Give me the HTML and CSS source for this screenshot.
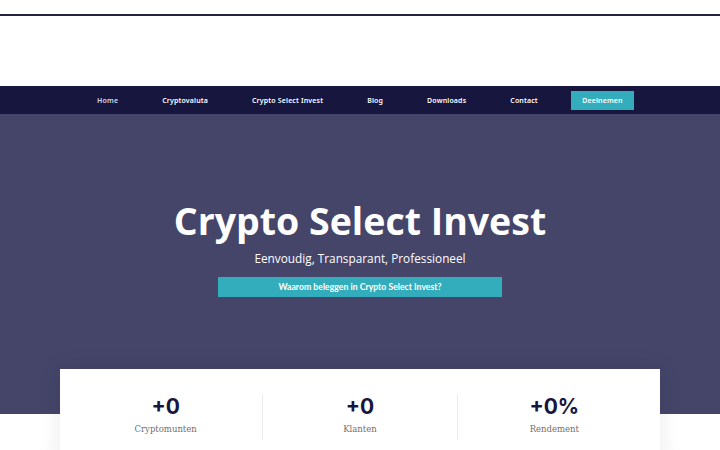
FILE: index.html
```html
<!DOCTYPE html>
<html lang="nl">
<head>
<meta charset="utf-8">
<title>Crypto Select Invest</title>
<link rel="stylesheet" href="styles.css">
</head>
<body>
<div class="topline"></div>
<header class="header"></header>
<nav class="nav">
  <ul class="menu">
    <li><a class="link home" href="#">Home</a></li>
    <li><a class="link" href="#">Cryptovaluta</a></li>
    <li><a class="link" href="#">Crypto Select Invest</a></li>
    <li><a class="link" href="#">Blog</a></li>
    <li><a class="link" href="#">Downloads</a></li>
    <li><a class="link" href="#">Contact</a></li>
    <li><a class="join" href="#">Deelnemen</a></li>
  </ul>
</nav>
<section class="hero">
  <h1 class="title">Crypto Select Invest</h1>
  <p class="subtitle">Eenvoudig, Transparant, Professioneel</p>
  <a class="cta" href="#">Waarom beleggen in Crypto Select Invest?</a>
</section>
<section class="stats-wrap">
  <div class="stats">
    <div class="stat">
      <div class="num">+0</div>
      <div class="label">Cryptomunten</div>
    </div>
    <div class="stat">
      <div class="num">+0</div>
      <div class="label">Klanten</div>
    </div>
    <div class="stat">
      <div class="num">+0%</div>
      <div class="label">Rendement</div>
    </div>
  </div>
</section>
</body>
</html>
```
FILE: styles.css
```css
* { box-sizing: border-box; }
html, body { margin: 0; padding: 0; }
body {
  background: #ffffff;
  font-family: "Open Sans", "Noto Sans", sans-serif;
  overflow: hidden;
  height: 450px;
}
.topline {
  margin-top: 14px;
  height: 2px;
  background: #25253f;
}
.header {
  height: 70px;
  background: #ffffff;
}
.nav {
  height: 28px;
  background: #16163f;
  display: flex;
  align-items: center;
  justify-content: center;
  padding-right: 11px;
}
.menu {
  list-style: none;
  margin: 0;
  padding: 0;
  display: flex;
  align-items: center;
}
.link {
  display: block;
  padding: 0 22px;
  color: #ffffff;
  text-decoration: none;
  font-family: "Noto Sans", sans-serif;
  font-weight: 600;
  font-size: 7px;
  letter-spacing: 0.15px;
}
.home { color: #d8d8e4; }
.join {
  display: block;
  margin-left: 11px;
  width: 63px;
  height: 19px;
  line-height: 19px;
  text-align: center;
  background: #33adbb;
  color: #ffffff;
  text-decoration: none;
  font-family: "Noto Sans", sans-serif;
  font-weight: 600;
  font-size: 7px;
  letter-spacing: 0.15px;
}
.hero {
  height: 300px;
  background: #45456a;
  display: flex;
  flex-direction: column;
  align-items: center;
  padding-top: 84px;
}
.title {
  margin: 0;
  color: #ffffff;
  font-family: "Open Sans", sans-serif;
  font-weight: 700;
  font-size: 37.5px;
  line-height: 45px;
}
.subtitle {
  margin: 6px 0 0;
  color: #ffffff;
  font-family: "Open Sans", sans-serif;
  font-size: 11.8px;
  line-height: 18px;
}
.cta {
  margin-top: 10px;
  width: 284px;
  height: 20px;
  line-height: 20px;
  text-align: center;
  background: #33adbb;
  color: #ffffff;
  text-decoration: none;
  font-family: "Lato", sans-serif;
  font-weight: 700;
  font-size: 8.7px;
}
.stats-wrap {
  display: flex;
  justify-content: center;
  margin-top: -45px;
}
.stats {
  width: 600px;
  height: 100px;
  background: #ffffff;
  box-shadow: 0 0 22px rgba(0, 0, 0, 0.09);
  display: flex;
  padding: 25px 9px 0;
}
.stat {
  flex: 1;
  display: flex;
  flex-direction: column;
  align-items: center;
  height: 46px;
  border-left: 1px solid #ececec;
}
.stat:first-child { border-left: none; }
.num {
  font-family: "Inter", "Noto Sans", sans-serif;
  font-weight: 700;
  font-size: 21px;
  line-height: 24px;
  margin-top: 1px;
  color: #16163f;
}
.label {
  margin-top: 5px;
  font-family: "DejaVu Serif", serif;
  font-size: 8.5px;
  color: #6f6f6f;
}
```
